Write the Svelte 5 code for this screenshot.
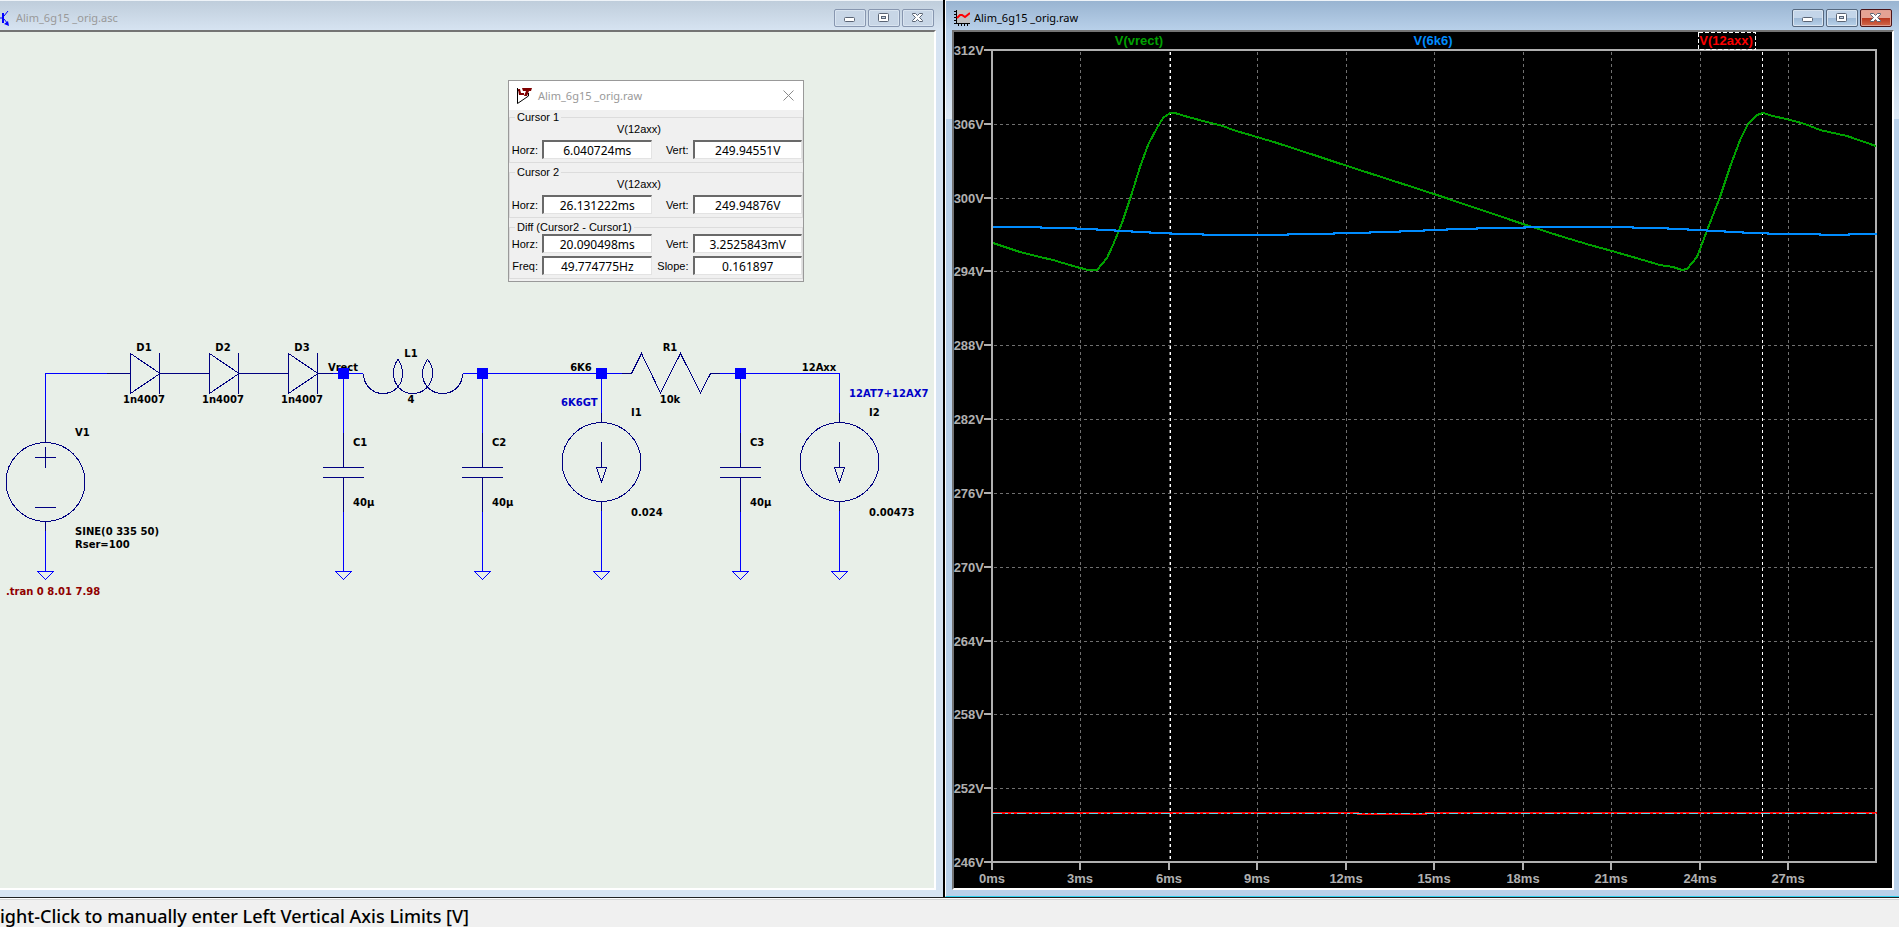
<script lang="ts">
  type Point = [number, number];

  // plot area inside the waveform viewer
  const left = 38;
  const top = 18;
  const width = 885;
  const height = 812;

  const volts = [312, 306, 300, 294, 288, 282, 276, 270, 264, 258, 252, 246];
  const times = [0, 3, 6, 9, 12, 15, 18, 21, 24, 27];
  const cursors = [178, 770];

  const yOf = (v: number) => Math.round(((312 - v) / 66) * height);
  const xOf = (t: number) => Math.floor((t / 30) * width);

  const vrect: Point[] = [
    [1, 193], [28, 202], [48, 207], [61, 210], [81, 216], [96, 220], [105, 220], [115, 208],
    [121, 195], [130, 173], [140, 143], [148, 117], [156, 95], [165, 78], [171, 68], [178, 63],
    [183, 63], [196, 67], [211, 71], [231, 76], [241, 80], [265, 87], [285, 93], [325, 106],
    [346, 113], [442, 144], [531, 174], [568, 186], [588, 192], [598, 195], [620, 201], [651, 210],
    [668, 215], [681, 217], [690, 220], [695, 219], [705, 207], [716, 178], [728, 147], [738, 117],
    [748, 90], [756, 74], [765, 65], [771, 63], [781, 66], [798, 70], [813, 74], [828, 80],
    [855, 86], [884, 96],
  ];

  const v6k6: Point[] = [
    [1, 177], [49, 178], [84, 179], [105, 180], [123, 181], [140, 182], [158, 183], [179, 184],
    [211, 185], [296, 184], [342, 183], [378, 182], [408, 181], [432, 180], [455, 179], [485, 178],
    [533, 177], [641, 178], [676, 179], [696, 180], [715, 181], [733, 182], [751, 183], [776, 184],
    [828, 185], [857, 184],
  ];

  const v12axx: Point[] = [[1, 763], [366, 764], [434, 763]];

  const line = (pts: Point[]) => 'M' + pts.map((p) => p.join(' ')).join('L');
  const steps = (pts: Point[]) =>
    `M${pts[0].join(' ')}` + pts.slice(1).map(([x, y]) => `H${x}V${y}`).join('') + `H${width}`;

  const diodes = [
    { name: 'D1', x: 130 },
    { name: 'D2', x: 209 },
    { name: 'D3', x: 288 },
  ];
  const caps = [
    { name: 'C1', x: 343 },
    { name: 'C2', x: 482 },
    { name: 'C3', x: 740 },
  ];
  const loads = [
    { name: 'I1', value: '0.024', x: 601 },
    { name: 'I2', value: '0.00473', x: 839 },
  ];
  const grounds = [45, 343, 482, 601, 740, 839];
  const nodes = [343, 482, 601, 740];

  const groups = [
    {
      title: 'Cursor 1',
      trace: 'V(12axx)',
      fields: [['Horz:', '6.040724ms'], ['Vert:', '249.94551V']],
    },
    {
      title: 'Cursor 2',
      trace: 'V(12axx)',
      fields: [['Horz:', '26.131222ms'], ['Vert:', '249.94876V']],
    },
    {
      title: 'Diff (Cursor2 - Cursor1)',
      trace: '',
      fields: [
        ['Horz:', '20.090498ms'], ['Vert:', '3.2525843mV'],
        ['Freq:', '49.774775Hz'], ['Slope:', '0.161897'],
      ],
    },
  ];
</script>

{#snippet controls()}
  <div class="controls">
    <button aria-label="Minimize">
      <svg width="14" height="12"><rect class="glyph" x="1.5" y="5.5" width="10" height="4" rx="1" /></svg>
    </button>
    <button aria-label="Restore">
      <svg width="14" height="12">
        <rect class="glyph" x="1.5" y="1.5" width="10" height="8" rx="1" />
        <rect class="hole" x="4.5" y="4.5" width="4" height="2" />
      </svg>
    </button>
    <button class="close" aria-label="Close">
      <svg width="14" height="12">
        <path class="glyph" d="M1.5 1.5H4.5L6.5 3.5L8.5 1.5H11.5V2.5L8.5 5.5L11.5 8.5V9.5H8.5L6.5 7.5L4.5 9.5H1.5V8.5L4.5 5.5L1.5 2.5Z" />
      </svg>
    </button>
  </div>
{/snippet}

<div class="app">
  <main>
    <section class="window schematic">
      <header>
        <svg class="icon" width="16" height="18">
          <path d="M0 9H3M3 4V14M4 7L8 2M4 10L8 15" stroke="#0000ff" fill="none" />
          <path d="M2 4H4V14H2ZM9 17L4 15L8 12Z" fill="#0000ff" />
        </svg>
        <h1>Alim_6g15 _orig.asc</h1>
        {@render controls()}
      </header>

      <div class="client">
        <svg class="canvas" viewBox="0 32 934 856" preserveAspectRatio="xMinYMin meet">
          <g class="wire">
            <path d="M45.5 420V373.5H107M333 373.5H363M463 373.5H622M720 373.5H839.5V413" />
            <path d="M45.5 531V571M601.5 373V413" />
            {#each caps as c}
              <path d="M{c.x + 0.5} 373V433M{c.x + 0.5} 512V571" />
            {/each}
            {#each loads as l}
              <path d="M{l.x + 0.5} 511V571" />
            {/each}
            {#each grounds as x}
              <path d="M{x - 7.5} 571.5H{x + 8.5}L{x + 0.5} 579.5Z" />
            {/each}
          </g>

          <g class="part">
            <path d="M45.5 420V442M45.5 521V531M107 373.5H130M160 373.5H209M239 373.5H288M319 373.5H333" />
            <circle cx="45.5" cy="482" r="39.5" />
            <path d="M35 457.5H56M45.5 447V468M35 507.5H56" />
            {#each diodes as d}
              <path d="M{d.x + 0.5} 353.5V393.5L{d.x + 30} 373.5ZM{d.x + 29.5} 353V394" />
            {/each}
            {#each caps as c}
              <path d="M{c.x + 0.5} 433V467M{c.x - 20} 467.5H{c.x + 21}M{c.x - 20} 477.5H{c.x + 21}M{c.x + 0.5} 477V512" />
            {/each}
            {#each loads as l}
              <path d="M{l.x + 0.5} 413V422M{l.x + 0.5} 501V511M{l.x + 0.5} 442V467" />
              <circle cx={l.x + 0.5} cy="462" r="39.5" />
              <path d="M{l.x - 4.5} 467.5H{l.x + 5.5}L{l.x + 0.5} 482Z" />
            {/each}
            <path
              d="M363.5 373.5C363.5 385 372 393.5 383 393.5C394 393.5 403 385 402.5 373C402 366 400 362 398 359.5
                C395 363 393.5 368 393.5 373.5C393.5 385 402 393.5 412.5 393.5C424 393.5 432.5 385 432.5 373
                C432.5 367 430 362 427.5 359.5C425 363 422.5 368 422.5 373.5C422.5 385 431 393.5 442.5 393.5
                C454 393.5 462.5 385 462.5 373.5"
            />
            <path d="M622 373.5H631.5L641.5 353.5L660.5 393L680.5 353.5L700.5 393L710.5 373.5H720" />
          </g>

          <g class="label">
            {#each diodes as d}
              <text class="mid" x={d.x + 14} y="351">{d.name}</text>
              <text class="mid" x={d.x + 14} y="403">1n4007</text>
            {/each}
            <text x="75" y="436">V1</text>
            <text x="75" y="535">SINE(0 335 50)</text>
            <text x="75" y="548">Rser=100</text>
            <text class="directive" x="6" y="595">.tran 0 8.01 7.98</text>
            <text class="mid" x="343" y="371">Vrect</text>
            <text class="mid" x="411" y="357">L1</text>
            <text class="mid" x="411" y="403">4</text>
            {#each caps as c}
              <text x={c.x + 10} y="446">{c.name}</text>
              <text x={c.x + 10} y="506">40µ</text>
            {/each}
            <text class="mid" x="581" y="371">6K6</text>
            <text class="comment" x="561" y="406">6K6GT</text>
            <text class="mid" x="670" y="351">R1</text>
            <text class="mid" x="670" y="403">10k</text>
            <text class="mid" x="819" y="371">12Axx</text>
            <text class="comment" x="849" y="397">12AT7+12AX7</text>
            {#each loads as l}
              <text x={l.x + 30} y="416">{l.name}</text>
              <text x={l.x + 30} y="516">{l.value}</text>
            {/each}
          </g>

          {#each nodes as x}
            <rect class="node" x={x - 5} y="368" width="11" height="11" />
          {/each}
        </svg>

        <div class="dialog" role="dialog" aria-label="Cursor readout">
          <div class="dialog-title">
            <svg width="16" height="16">
              <path d="M1.5 0V15.5L12.5 8V5M1 1L4 4" stroke="#000" fill="none" />
              <path d="M2 1H4L5 5H8V7H3ZM6 0H16L15 3H13L11 8H8L10 3H7Z" fill="#7f0000" />
            </svg>
            <h2>Alim_6g15 _orig.raw</h2>
            <button aria-label="Close readout">
              <svg width="11" height="11"><path d="M0.5 0.5L10.5 10.5M10.5 0.5L0.5 10.5" stroke="#8a8a8a" /></svg>
            </button>
          </div>
          <div class="dialog-body">
            {#each groups as group, g}
              <fieldset>
                <legend>{group.title}</legend>
                {#if group.trace}<p>{group.trace}</p>{/if}
                <div class="fields">
                  {#each group.fields as [name, value], i}
                    <label for="f{g}{i}">{name}</label>
                    <input id="f{g}{i}" type="text" readonly {value} />
                  {/each}
                </div>
              </fieldset>
            {/each}
          </div>
        </div>
      </div>
    </section>

    <section class="window active">
      <header>
        <svg class="icon" width="16" height="16">
          <rect x="2" width="14" height="14" fill="#c0c0c0" />
          <path d="M2.5 0V14M0 13.5H16M0 1.5H2M0 4.5H2M0 7.5H2M0 10.5H2M4.5 14V16M7.5 14V16M10.5 14V16M13.5 14V16" stroke="#000" fill="none" />
          <path d="M3 8L6 5H8L11 7L16 3" stroke="#ff0000" stroke-width="2" fill="none" />
        </svg>
        <h1>Alim_6g15 _orig.raw</h1>
        {@render controls()}
      </header>

      <div class="client">
        <svg class="canvas plot" viewBox="0 0 938 856" preserveAspectRatio="xMinYMin meet">
          <text class="mid" x="185" y="13" fill="#00a000">V(vrect)</text>
          <text class="mid" x="479" y="13" fill="#008cff">V(6k6)</text>
          <text class="mid" x="772" y="13" fill="#ff0000">V(12axx)</text>

          <g transform="translate({left} {top})">
            {#each volts as v, i}
              {#if i > 0 && i < volts.length - 1}
                <path class="grid" d="M2 {yOf(v) + 0.5}H{width}" />
              {/if}
              <path class="axis" d="M-8 {yOf(v)}H0" />
              <text class="tick" x="-8" y={yOf(v) + 5}>{v}V</text>
            {/each}
            {#each times as t, i}
              {#if i > 0}
                <path class="grid" d="M{xOf(t) + 0.5} 2V{height}" />
              {/if}
              <path class="axis" d="M{xOf(t)} {height}V{height + 8}" />
              <text class="tick mid" x={xOf(t)} y={height + 21}>{t}ms</text>
            {/each}

            <rect class="axis" width={width - 1} {height} />
            {#each cursors as x}
              <path class="cursor" d="M{x + 0.5} 2V{height}" />
            {/each}

            <path class="trace" d={line(vrect)} stroke="#00a000" />
            <path class="trace" d={steps(v6k6)} stroke="#008cff" />
            <path class="trace" d={steps(v12axx)} stroke="#ff0000" />
            <path class="level" d="M1 763.5H{width - 1}" />
          </g>
          <rect class="selected" x="744.5" y="0.5" width="57" height="17" />
        </svg>
      </div>
    </section>
  </main>

  <footer>ight-Click to manually enter Left Vertical Axis Limits [V]</footer>
</div>

<style>
  :global(body) { overflow: hidden; }
  .app {
    display: flex;
    flex-direction: column;
    height: 100vh;
    background: #f0f0f0;
    font-family: 'Noto Sans', 'Open Sans', sans-serif;
  }
  main {
    flex: 1;
    min-height: 0;
    display: grid;
    grid-template-columns: 943fr 954fr;
    gap: 2px;
    background: #000;
    border-bottom: 1px solid #202020;
  }
  .window {
    display: flex;
    flex-direction: column;
    min-width: 0;
    min-height: 0;
    box-sizing: border-box;
    border-top: 1px solid #eef3f8;
    background: linear-gradient(#bfcddb, #d7e4f2 30px);
    padding: 0 7px 7px 0;
  }
  .window.active {
    border-left: 1px solid #fff;
    border-bottom: 1px solid #2fd0ee;
    background: linear-gradient(#99b4d1, #b9d1ea 30px, #dde8f4 118px, #b9d1ea 118px);
    padding: 0 5px 6px 6px;
  }
  header {
    display: flex;
    align-items: center;
    height: 29px;
    flex: none;
    box-sizing: border-box;
    padding-top: 5px;
  }
  .schematic header { margin-right: 2px; }
  .active header { padding: 5px 2px 0; }
  .icon { flex: none; }
  h1, h2 {
    flex: 1;
    margin: 0;
    font-size: 11px;
    font-weight: 400;
    line-height: 16px;
    color: #999;
    white-space: nowrap;
  }
  .active h1 { color: #000; padding-left: 4px; }

  .controls { display: flex; gap: 2px; }
  .controls button {
    width: 32px;
    height: 18px;
    padding: 0;
    display: flex;
    align-items: center;
    justify-content: center;
    border: 1px solid #8796af;
    border-radius: 2px;
    background: #c8d6e6;
    box-shadow: inset 0 0 0 1px #d9e4f0;
  }
  .active .controls button {
    border-color: #56687f;
    background: linear-gradient(#c3d5e9 50%, #9db8d5 50%, #b9d2ea);
  }
  .active .controls .close {
    border-color: #4a1418;
    background: linear-gradient(#e5a294 50%, #b8361e 50%, #d26a4c);
    box-shadow: inset 0 0 0 1px #e0a093;
  }
  .glyph { fill: #fff; stroke: #5a6474; }
  .hole { fill: #c8d6e6; stroke: #5a6474; }

  .client {
    position: relative;
    flex: 1;
    min-height: 0;
    border-top: 2px solid #747474;
    border-right: 2px solid #fff;
    border-bottom: 2px solid #fff;
    background: #e8efe8;
  }
  .active .client { border-left: 2px solid #747474; background: #000; }
  .canvas { display: block; width: 100%; height: 100%; }

  .wire, .part { fill: none; shape-rendering: crispEdges; }
  .wire { stroke: #0000ff; }
  .part { stroke: #000080; }
  .node { fill: #0000ff; }
  .label {
    font-family: 'DejaVu Sans', sans-serif;
    font-size: 10px;
    font-weight: 700;
    fill: #000;
  }
  .mid { text-anchor: middle; }
  .directive { fill: #900000; }
  .comment { fill: #0000c8; }

  .plot text {
    font-family: 'Liberation Sans', Arial, sans-serif;
    font-size: 13px;
    font-weight: 700;
  }
  .plot .tick { fill: #b0b0b0; }
  .plot .tick:not(.mid) { text-anchor: end; }
  .plot path, .plot rect { fill: none; shape-rendering: crispEdges; }
  .axis { stroke: #b0b0b0; stroke-width: 2; }
  .grid { stroke: #707070; stroke-dasharray: 3 3; }
  .cursor { stroke: #fff; stroke-dasharray: 3 3; }
  .selected { stroke: #fff; stroke-dasharray: 4 2; }
  .trace { stroke-width: 2; }
  .level { stroke: #59d5e5; stroke-dasharray: 9 3 3 3 3 3; }

  .dialog {
    position: absolute;
    left: 508px;
    top: 48px;
    width: 296px;
    box-sizing: border-box;
    border: 1px solid #999;
    background: #f0f0f0;
  }
  .dialog-title {
    display: flex;
    align-items: center;
    gap: 6px;
    height: 29px;
    padding: 0 9px 0 7px;
    background: #fff;
  }
  .dialog-title button {
    display: flex;
    padding: 0;
    border: 0;
    background: none;
  }
  .dialog-body {
    display: flex;
    flex-direction: column;
    gap: 2px;
    padding-bottom: 2px;
    font-family: 'Liberation Sans', Arial, sans-serif;
    font-size: 11px;
    line-height: 14px;
  }
  fieldset {
    min-width: 0;
    margin: 0;
    padding: 0 0 3px;
    border: 1px solid #dcdcdc;
  }
  legend { margin-left: 5px; padding: 0 2px; }
  p { margin: -2px 34px 4px 0; text-align: center; }
  .fields {
    display: grid;
    grid-template-columns: 28px 1fr 33px 1fr;
    align-items: center;
    gap: 3px 4px;
  }
  label { text-align: right; white-space: nowrap; }
  input {
    width: 100%;
    height: 19px;
    box-sizing: border-box;
    padding: 0;
    border: 1px solid #e3e3e3;
    border-top: 2px solid #696969;
    border-left: 2px solid #696969;
    border-radius: 0;
    background: #fff;
    color: #000;
    font-family: 'Noto Sans', 'Open Sans', sans-serif;
    font-size: 12px;
    text-align: center;
    outline: none;
  }

  footer {
    height: 29px;
    flex: none;
    box-sizing: border-box;
    border-top: 1px solid #fff;
    box-shadow: inset 0 1px #d4d4d4;
    padding-top: 5px;
    font-size: 18px;
    font-weight: 500;
    line-height: 24px;
    color: #000;
    white-space: nowrap;
    overflow: hidden;
  }
</style>
